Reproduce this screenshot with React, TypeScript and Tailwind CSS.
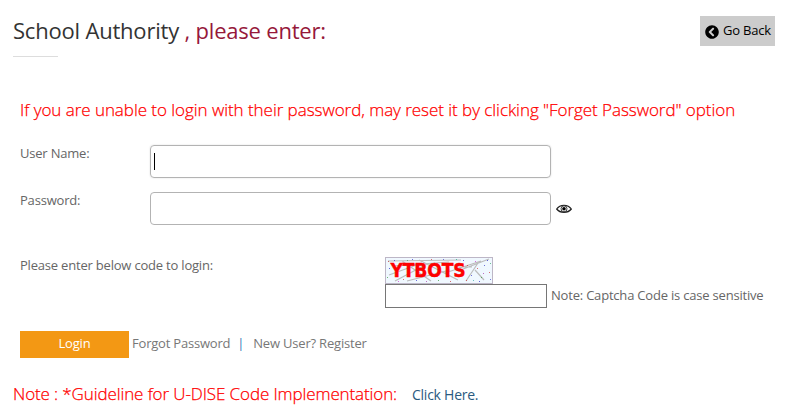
import React, { useState } from 'react';
import { FaChevronCircleLeft } from 'react-icons/fa';

const EyeIcon = () => (
  <svg width="16" height="10" viewBox="0 0 16 10" fill="none">
    <path d="M0.7 5C4 0.1 12 0.1 15.3 5C12 9.4 4 9.4 0.7 5Z" stroke="#222" strokeWidth="1.3" />
    <circle cx="8" cy="4.8" r="3" stroke="#444" strokeWidth="1" />
    <circle cx="8" cy="4.8" r="1.8" fill="#000" />
  </svg>
);

const SPECKS = [
  [3, 4, '#c33'], [9, 3, '#33c'], [4, 11, '#22c'], [2, 20, '#393'], [13, 24, '#c3c'],
  [22, 3, '#3a6'], [27, 2, '#33c'], [18, 22, '#d33'], [31, 23, '#33c'], [41, 24, '#a3a'],
  [46, 2, '#c33'], [53, 23, '#393'], [58, 2, '#44c'], [65, 24, '#c33'], [71, 2, '#2a8'],
  [78, 3, '#22c'], [82, 8, '#c33'], [86, 18, '#33c'], [90, 4, '#c3c'], [92, 11, '#d33'],
  [96, 20, '#393'], [99, 8, '#33c'], [102, 3, '#22c'], [104, 15, '#c33'], [105, 22, '#44c'],
  [88, 23, '#3aa'], [81, 23, '#c33'], [98, 16, '#a3a'], [94, 24, '#22c'], [105, 6, '#3a6'],
] as const;

const Captcha = () => (
  <svg width="108" height="27" viewBox="0 0 108 27">
    <rect x="0.5" y="0.5" width="107" height="26" fill="#f0f8ff" stroke="#bdb6c6" />
    <g stroke="#bcbcbc" strokeWidth="1.2" fill="none">
      <path d="M3 4L76 3M8 9L64 5M4 18L37 6M10 24L42 7M17 4L46 24M22 24L65 13" />
      <path d="M34 3L73 23M73 14L104 2M60 16L96 4M81 24L93 6M90 13L99 23M70 10L87 10" />
    </g>
    {SPECKS.map(([x, y, color]) => (
      <rect key={`${x}-${y}`} x={x} y={y} width="1" height="1" fill={color} opacity="0.7" />
    ))}
    <text
      x="5.5"
      y="20"
      textLength="75"
      lengthAdjust="spacingAndGlyphs"
      className="font-['DejaVu_Sans',sans-serif] text-[19px] font-bold"
      fill="#fe0000"
      stroke="#fe0000"
      strokeWidth="0.4"
    >
      YTBOTS
    </text>
  </svg>
);

export default function App() {
  const [userName, setUserName] = useState('');
  const [password, setPassword] = useState('');
  const [showPassword, setShowPassword] = useState(false);
  const [code, setCode] = useState('');

  return (
    <div className="h-[419px] w-[791px] overflow-hidden bg-white font-['Open_Sans',sans-serif] text-[13px] tracking-[-0.2px] text-[#666]">
      {/* Heading */}
      <header className="flex h-[57px] items-start justify-between pl-[13px] pr-4">
        <div className="flex h-[57px] flex-col justify-between pt-[15px]">
          <h1 className="whitespace-nowrap text-[22px] leading-[30px] tracking-[-0.2px] text-[#333]">
            School Authority <span className="text-[#96183a]">, please enter:</span>
          </h1>
          <div className="h-px w-[45px] bg-[#ddd]" />
        </div>
        <button className="mt-4 flex h-[30px] w-[75px] items-center gap-1 bg-[#ccc] pl-[5px] text-black">
          <FaChevronCircleLeft size={14} className="mt-px shrink-0" />
          <span className="whitespace-nowrap">Go Back</span>
        </button>
      </header>

      <form className="pl-5" onSubmit={e => e.preventDefault()}>
        <p className="mt-[41px] h-6 whitespace-nowrap text-[17px] font-light leading-6 tracking-[-0.047px] text-[#f00] [-webkit-text-stroke:0.25px_#f00]">
          If you are unable to login with their password, may reset it by clicking "Forget Password" option
        </p>

        <div className="mt-[23px] flex h-[33px]">
          <label htmlFor="user" className="w-[130px] leading-4">User Name:</label>
          <div className="flex w-[401px] items-center rounded border border-[#b3b3b3] pl-[3px] shadow-[0_0_2px_#ddd]">
            <span className="h-[17px] w-px bg-black" />
            <input
              id="user"
              value={userName}
              onChange={e => setUserName(e.target.value)}
              className="h-full flex-1 caret-transparent outline-none"
            />
          </div>
        </div>

        <div className="mt-[14px] flex h-[33px]">
          <label htmlFor="password" className="w-[130px] leading-4">Password:</label>
          <input
            id="password"
            type={showPassword ? 'text' : 'password'}
            value={password}
            onChange={e => setPassword(e.target.value)}
            className="w-[401px] rounded border border-[#b3b3b3] px-1 outline-none"
          />
          <button type="button" aria-label="Show password" className="ml-[5px] mt-3 h-[10px]" onClick={() => setShowPassword(!showPassword)}>
            <EyeIcon />
          </button>
        </div>

        {/* Captcha */}
        <div className="mt-8 flex h-[51px]">
          <label htmlFor="code" className="w-[365px] leading-4">Please enter below code to login:</label>
          <div className="flex flex-col">
            <Captcha />
            <div className="flex h-6 items-center">
              <input
                id="code"
                value={code}
                onChange={e => setCode(e.target.value)}
                className="h-6 w-[162px] border border-[#767676] px-1 outline-none"
              />
              <span className="ml-1 whitespace-nowrap">Note: Captcha Code is case sensitive</span>
            </div>
          </div>
        </div>

        <div className="mt-[23px] flex h-[27px] whitespace-nowrap leading-[25px] text-[#777]">
          <button type="submit" className="h-[27px] w-[109px] bg-[#f39814] pb-0.5 text-white">Login</button>
          <a href="#" className="ml-[3px]">Forgot Password</a>
          <span className="ml-[7px] text-[#337ab7]">|</span>
          <a href="#" className="ml-[9px]">New User? Register</a>
        </div>
      </form>

      <footer className="mt-6 flex h-6 items-center whitespace-nowrap pl-[13px]">
        <span className="w-[384px] text-[17px] font-light tracking-[-0.11px] text-[#f00] [-webkit-text-stroke:0.25px_#f00]">
          Note : *Guideline for U-DISE Code Implementation:
        </span>
        <a href="#" className="ml-[15px] mt-0.5 text-sm tracking-[-0.25px] text-[#2a5a80]">Click Here.</a>
      </footer>
    </div>
  );
}
